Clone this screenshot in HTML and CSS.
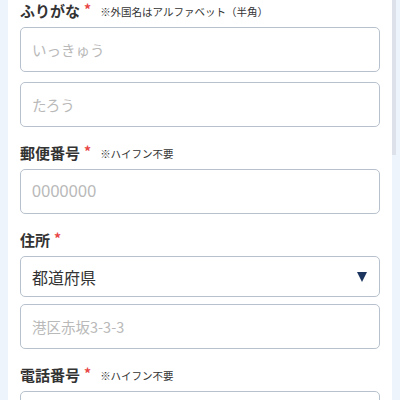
FILE: index.html
```html
<!DOCTYPE html>
<html lang="ja">
<head>
<meta charset="utf-8">
<link rel="stylesheet" href="styles.css">
</head>
<body>
<div class="page">
  <form class="card">
    <div class="field">
      <div class="label">ふりがな<span class="req">*</span><span class="note">※外国名はアルファベット（半角）</span></div>
      <div class="input placeholder">いっきゅう</div>
      <div class="input placeholder gap">たろう</div>
    </div>
    <div class="field">
      <div class="label">郵便番号<span class="req">*</span><span class="note">※ハイフン不要</span></div>
      <div class="input placeholder num">0000000</div>
    </div>
    <div class="field">
      <div class="label">住所<span class="req">*</span></div>
      <div class="select"><span>都道府県</span><span class="arrow"></span></div>
      <div class="input placeholder gap-s">港区赤坂3-3-3</div>
    </div>
    <div class="field">
      <div class="label">電話番号<span class="req">*</span><span class="note">※ハイフン不要</span></div>
      <div class="input"></div>
    </div>
  </form>
  <div class="scroll-thumb"></div>
</div>
</body>
</html>
```
FILE: styles.css
```css
html, body {
  margin: 0;
  padding: 0;
  height: 100%;
  overflow: hidden;
}
body {
  background: #eef4fc;
  font-family: "Noto Sans CJK JP", "Noto Sans", sans-serif;
  color: #333;
}
.page {
  position: relative;
  height: 400px;
  overflow: hidden;
}
.card {
  margin: 0 8px;
  background: #fff;
  padding: 1px 12px 0;
  height: 400px;
  box-sizing: border-box;
}
.field {
  display: flex;
  flex-direction: column;
}
.field + .field {
  margin-top: 16px;
}
.label {
  display: flex;
  align-items: center;
  height: 20px;
  font-size: 15px;
  font-weight: 700;
  color: #333;
  line-height: 20px;
  margin-bottom: 6px;
}
.req {
  color: #e84545;
  font-size: 14px;
  margin-left: 4px;
  align-self: flex-start;
  line-height: 17px;
}
.note {
  font-size: 10.5px;
  font-weight: 400;
  margin-left: 9px;
  color: #333;
  padding-top: 2px;
}
.input {
  height: 45px;
  box-sizing: border-box;
  border: 1px solid #b7c1ce;
  border-radius: 5px;
  padding: 0 11px;
  display: flex;
  align-items: center;
  font-size: 14.5px;
}
.placeholder {
  color: #b9b9b9;
}
.num {
  font-family: "Liberation Sans", sans-serif;
  font-size: 16px;
  letter-spacing: 0.3px;
}
.gap {
  margin-top: 10px;
}
.gap-s {
  margin-top: 7px;
}
.select {
  height: 41px;
  box-sizing: border-box;
  border: 1px solid #b7c1ce;
  border-radius: 5px;
  padding: 0 12px 0 11px;
  display: flex;
  align-items: center;
  justify-content: space-between;
  font-size: 16px;
  color: #333;
}
.arrow {
  width: 0;
  height: 0;
  border-left: 5px solid transparent;
  border-right: 5px solid transparent;
  border-top: 10px solid #1c355e;
}
.scroll-thumb {
  position: absolute;
  left: 392px;
  top: 0;
  width: 4px;
  height: 155px;
  background: #dde2ea;
}
```
